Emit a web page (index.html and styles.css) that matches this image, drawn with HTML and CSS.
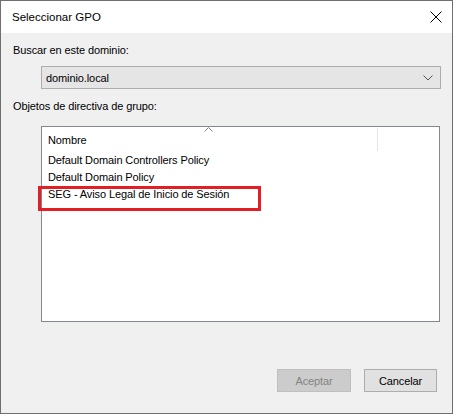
FILE: index.html
```html
<!DOCTYPE html>
<html lang="es">
    <head>
        <meta charset="UTF-8">
        <title>Seleccionar GPO</title>
        <link rel="stylesheet" href="styles.css">
    </head>
    <body>
        <div class="dialog">
            <div class="titlebar">
                <span class="title">Seleccionar GPO</span>
                <svg class="close" width="12" height="12" viewBox="0 0 12 12">
                    <path d="M0.5 0.5 L11.5 11.5 M11.5 0.5 L0.5 11.5" stroke="#000" stroke-width="1" fill="none"/>
                </svg>
            </div>
            <div class="content">
                <div class="label">Buscar en este dominio:</div>
                <div class="combo">
                    <span>dominio.local</span>
                    <svg width="10" height="6" viewBox="0 0 10 6">
                        <path d="M0.5 0.5 L5 5 L9.5 0.5" stroke="#555" stroke-width="1" fill="none"/>
                    </svg>
                </div>
                <div class="label label-list">Objetos de directiva de grupo:</div>
                <div class="list">
                    <div class="list-head">
                        <span class="col-name">Nombre</span>
                        <svg class="sort" width="9" height="5" viewBox="0 0 9 5">
                            <path d="M0.5 4.5 L4.5 0.5 L8.5 4.5" stroke="#888" stroke-width="1" fill="none"/>
                        </svg>
                        <span class="col-rest"></span>
                    </div>
                    <ul class="rows">
                        <li>Default Domain Controllers Policy</li>
                        <li>Default Domain Policy</li>
                        <li>SEG - Aviso Legal de Inicio de Sesión</li>
                    </ul>
                </div>
            </div>
            <div class="footer">
                <button class="btn" disabled>Aceptar</button>
                <button class="btn">Cancelar</button>
            </div>
            <div class="mark"></div>
        </div>
    </body>
</html>
```

FILE: styles.css
```css
body, ul {
    margin: 0;
    padding: 0;
}

body {
    font-family: "Liberation Sans", Arial, sans-serif;
    font-size: 11px;
    letter-spacing: -0.1px;
    color: #000;
}

.dialog {
    position: relative;
    display: flex;
    flex-direction: column;
    box-sizing: border-box;
    width: 453px;
    height: 414px;
    border: 1px solid #6f6f6f;
    background-color: #f0f0f0;
}

.titlebar {
    display: flex;
    align-items: center;
    justify-content: space-between;
    height: 32px;
    padding: 0 10px 0 11px;
    background-color: #fff;
}

.title {
    font-size: 11.5px;
    letter-spacing: 0;
}

.content {
    padding: 9px 12px 0 12px;
}

.label {
    line-height: 16px;
}

.combo {
    display: flex;
    align-items: center;
    justify-content: space-between;
    box-sizing: border-box;
    width: 400px;
    height: 23px;
    margin: 8px 0 0 28px;
    padding: 0 7px 0 4px;
    border: 1px solid #adadad;
    background-color: #e5e5e5;
}

.label-list {
    margin-top: 9px;
}

.list {
    box-sizing: border-box;
    width: 399px;
    height: 196px;
    margin: 12px 0 0 28px;
    border: 1px solid #828790;
    background-color: #fff;
}

.list-head {
    position: relative;
    display: flex;
    height: 25px;
}

.col-name {
    width: 329px;
    padding-left: 6px;
    line-height: 26px;
}

.col-rest {
    margin-top: 1px;
    height: 23px;
    border-left: 1px solid #e5e5e5;
}

.sort {
    position: absolute;
    left: 162px;
    top: 0;
}

.rows {
    list-style: none;
}

.rows li {
    height: 17px;
    padding-left: 6px;
    line-height: 17px;
}

.footer {
    display: flex;
    justify-content: flex-end;
    gap: 13px;
    margin-top: 47px;
    padding-right: 15px;
}

.btn {
    box-sizing: border-box;
    width: 73px;
    height: 23px;
    padding: 0;
    font-family: inherit;
    font-size: 11px;
    letter-spacing: -0.1px;
    color: #000;
    border: 1px solid #adadad;
    background-color: #e1e1e1;
}

.btn:disabled {
    width: 74px;
    color: #838383;
    border-color: #bfbfbf;
    background-color: #cccccc;
}

/* anotacion de la captura */
.mark {
    position: absolute;
    left: 37px;
    top: 185px;
    width: 223px;
    height: 25px;
    box-sizing: border-box;
    border: 3px solid #e31e24;
}
```
